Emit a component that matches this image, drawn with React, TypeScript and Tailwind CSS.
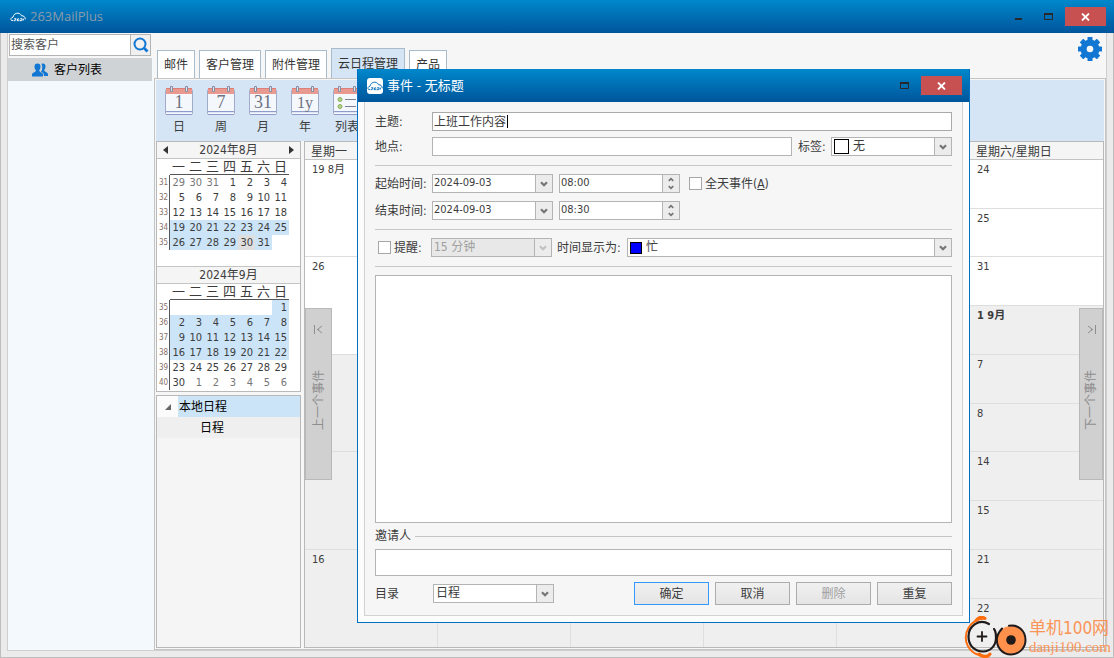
import React, { useState } from 'react';
import clsx from 'clsx';

const tabs = ['邮件', '客户管理', '附件管理', '云日程管理', '产品'];

const views = [
    { glyph: '1', label: '日' },
    { glyph: '7', label: '周' },
    { glyph: '31', label: '月' },
    { glyph: '1y', label: '年' },
    { glyph: '', label: '列表' },
];

const weekdays = ['一', '二', '三', '四', '五', '六', '日'];

type Week = { no: number; days: (number | null)[]; muted?: number[]; marked?: number[]; today?: number };

const august: Week[] = [
    { no: 31, days: [29, 30, 31, 1, 2, 3, 4], muted: [0, 1, 2] },
    { no: 32, days: [5, 6, 7, 8, 9, 10, 11] },
    { no: 33, days: [12, 13, 14, 15, 16, 17, 18] },
    { no: 34, days: [19, 20, 21, 22, 23, 24, 25], marked: [0, 1, 2, 3, 4, 5, 6] },
    { no: 35, days: [26, 27, 28, 29, 30, 31, null], marked: [0, 1, 2, 3, 4, 5], today: 4 },
];

const september: Week[] = [
    { no: 35, days: [null, null, null, null, null, null, 1], marked: [6] },
    { no: 36, days: [2, 3, 4, 5, 6, 7, 8], marked: [0, 1, 2, 3, 4, 5, 6] },
    { no: 37, days: [9, 10, 11, 12, 13, 14, 15], marked: [0, 1, 2, 3, 4, 5, 6] },
    { no: 38, days: [16, 17, 18, 19, 20, 21, 22], marked: [0, 1, 2, 3, 4, 5, 6] },
    { no: 39, days: [23, 24, 25, 26, 27, 28, 29] },
    { no: 40, days: [30, 1, 2, 3, 4, 5, 6], muted: [1, 2, 3, 4, 5, 6] },
];

const planner = [
    { monday: '19 8月', saturday: '24', sunday: '25', grey: false, greySunday: false },
    { monday: '26', saturday: '31', sunday: '1 9月', grey: false, greySunday: true },
    { monday: '', saturday: '7', sunday: '8', grey: true, greySunday: true },
    { monday: '', saturday: '14', sunday: '15', grey: true, greySunday: true },
    { monday: '16', saturday: '21', sunday: '22', grey: true, greySunday: true },
];

const CloudLogo = ({ className }: { className?: string }) => (
    <svg viewBox="0 0 16 10" className={className} fill="none" stroke="currentColor" strokeLinecap="round">
        <path d="M2.500 8.500H1.500C.3 7.200 1 5.600 3 5.200C3.500 2.500 5.500 1 8 1.200C9.800 1.400 11 2.400 11.500 3.800C13.800 3.600 15.300 5 15.300 7" strokeWidth="1" />
        <path d="M4.500 6.800h1.600l-1 1.900H4M8.500 6.800H7.700l-.6 1.900h1.500l.2-.8M10.500 6.800h1.700l-.6 1.900H10M13.500 7l-.4 1.300" strokeWidth="1" />
    </svg>
);

const CalendarIcon = ({ glyph }: { glyph: string }) => (
    <svg width="28" height="30" viewBox="0 0 28 30">
        <rect x="0.500" y="3.500" width="27" height="25" rx="1" fill="#f4f7fb" stroke="#a3abcb" />
        <path d="M1 26.500h26" stroke="#dfe5f3" />
        <path d="M1 25.500h26M1 28.500h26" stroke="#8f9bc8" />
        <rect x="1" y="3" width="26" height="5" fill="#e99a90" />
        <path d="M1 2.500h26" stroke="#dc7f76" />
        <path d="M5.500 0.500h2v5h-2zM20.500 0.500h2v5h-2z" fill="#e4e6ee" stroke="#878ba0" />
        {glyph ? (
            <text x="14" y="22" textAnchor="middle" fontSize={glyph === '1y' ? 16 : 18} fill="#6d7180" fontFamily="'Liberation Serif', serif">
                {glyph}
            </text>
        ) : (
            <>
                <circle cx="7" cy="13.500" r="2" fill="#b5d486" stroke="#8aab5c" />
                <circle cx="7" cy="20.500" r="2" fill="#b5d486" stroke="#8aab5c" />
                <path d="M12 13.500h11M12 20.500h11" stroke="#7d8193" />
            </>
        )}
    </svg>
);

const GearIcon = () => (
    <svg width="24" height="24" viewBox="-12 -12 24 24" fill="#1277d3">
        {[0, 45, 90, 135].map((angle) => (
            <rect key={angle} x="-2.500" y="-12" width="5" height="24" rx="0.500" transform={`rotate(${angle})`} />
        ))}
        <circle r="9.500" />
        <circle r="3.300" fill="#f6f6f6" />
    </svg>
);

const Chevron = ({ up = false, small = false }: { up?: boolean; small?: boolean }) => (
    <svg width={small ? 6 : 8} height={small ? 5 : 6} viewBox="0 0 8 6" fill="none" stroke="currentColor" strokeWidth="2.200">
        <path d={up ? 'M1 4.800L4 1.800L7 4.800' : 'M1 1.200L4 4.200L7 1.200'} />
    </svg>
);

const MaximizeIcon = () => (
    <svg width="9" height="7" viewBox="0 0 9 7">
        <path d="M0.500 0v6.500h8V0" fill="none" stroke="#26282b" />
        <rect width="9" height="2" fill="#26282b" />
    </svg>
);

const CloseButton = () => (
    <button aria-label="关闭" className="flex h-[19px] w-[41px] items-center justify-center bg-[#c75050] text-white">
        <svg width="9" height="8" viewBox="0 0 9 8" stroke="currentColor" strokeWidth="1.800">
            <path d="M1 0.500L8 7.500M8 0.500L1 7.500" />
        </svg>
    </button>
);

const MonthTable = ({ title, weeks, nav = false }: { title: string; weeks: Week[]; nav?: boolean }) => (
    <div className="h-[124px]">
        <div className="flex h-[17px] items-center justify-between border-b border-[#c4c4c4] bg-[#f5f5f5] px-1.5">
            {nav ? (
                <button aria-label="上个月" className="h-0 w-0 border-y-4 border-r-[5px] border-y-transparent border-r-[#333]" />
            ) : <span />}
            <span>{title}</span>
            {nav ? (
                <button aria-label="下个月" className="h-0 w-0 border-y-4 border-l-[5px] border-y-transparent border-l-[#333]" />
            ) : <span />}
        </div>
        <table className="table-fixed border-separate border-spacing-0">
            <colgroup>
                <col className="w-[13px]" />
                {weekdays.map((day) => <col key={day} className="w-[17px]" />)}
            </colgroup>
            <thead>
                <tr className="h-4 leading-[14px]">
                    <th className="p-0" />
                    {weekdays.map((day) => (
                        <th key={day} className="border-b border-[#555] p-0 text-[13px] font-normal">{day}</th>
                    ))}
                </tr>
            </thead>
            <tbody>
                {weeks.map((week) => (
                    <tr key={week.no} className="h-[15px] text-[11px] leading-[15px]">
                        <th className="border-r border-[#555] p-0 text-left text-[8px] font-normal leading-[15px] text-[#876f68]">
                            <span className="pl-0.5">{week.no}</span>
                        </th>
                        {week.days.map((day, i) => (
                            <td
                                key={i}
                                className={clsx(
                                    'p-0 pr-0.5 text-right',
                                    week.today === i ? 'bg-[#dfdfdf]' : week.marked?.includes(i) && 'bg-[#cce4f7]',
                                    week.muted?.includes(i) && 'text-[#777]',
                                )}
                            >
                                {day}
                            </td>
                        ))}
                    </tr>
                ))}
            </tbody>
        </table>
    </div>
);

const EventJump = ({ label, side }: { label: string; side: 'left' | 'right' }) => (
    <button
        className={clsx(
            'absolute top-[166px] flex h-[172px] flex-col items-center border border-[#b9b9b9] bg-[#d0d0d0] pt-4 text-[#8e8e8e]',
            side === 'left' ? 'left-0 w-[27px]' : 'right-0 w-6',
        )}
    >
        <svg width="9" height="9" viewBox="0 0 9 9" fill="none" stroke="currentColor" className={side === 'right' ? 'rotate-180' : ''}>
            <path d="M0.500 0v9M8 1L3.500 4.500L8 8M3 4.500h2" />
        </svg>
        <span className="mt-9 rotate-180 [text-orientation:sideways] [writing-mode:vertical-rl]">{label}</span>
    </button>
);

type ComboProps = {
    id: string;
    options: string[];
    disabled?: boolean;
    swatch?: React.ReactNode;
    padding?: string;
    className?: string;
};

const Combo = ({ id, options, disabled, swatch, padding = 'pl-0.5', className }: ComboProps) => (
    <div className={clsx('relative h-[19px]', disabled ? 'text-[#a0a0a0]' : 'text-[#3c3c3c]', className)}>
        <select
            id={id}
            disabled={disabled}
            className={clsx(
                'block h-full w-full appearance-none border border-[#b4b4b4] pr-5 leading-[17px] opacity-100',
                disabled ? 'bg-[#e8e8e8]' : 'bg-white',
                padding,
            )}
        >
            {options.map((option) => <option key={option}>{option}</option>)}
        </select>
        {swatch && <span className="pointer-events-none absolute inset-y-0 left-[3px] flex items-center">{swatch}</span>}
        <span
            className={clsx(
                'pointer-events-none absolute inset-y-0 right-0 flex w-[18px] items-center justify-center border border-[#b4b4b4] bg-[#ececec]',
                disabled ? 'text-[#c2c2c2]' : 'text-[#757575]',
            )}
        >
            <Chevron />
        </span>
    </div>
);

const DateField = ({ id, value }: { id: string; value: string }) => (
    <div className="flex h-[19px] w-[121px] border border-[#b4b4b4] bg-white">
        <input id={id} defaultValue={value} className="min-w-0 flex-1 px-px text-[11px] outline-none" />
        <button aria-label="选择日期" className="flex w-[17px] items-center justify-center border-l border-[#b4b4b4] bg-[#ececec] text-[#757575]">
            <Chevron />
        </button>
    </div>
);

const TimeField = ({ label, value }: { label: string; value: string }) => (
    <div className="ml-1.5 flex h-[19px] w-[121px] border border-[#b4b4b4] bg-white">
        <input aria-label={label} defaultValue={value} className="min-w-0 flex-1 px-px text-[11px] outline-none" />
        <div className="flex w-[17px] flex-col border-l border-[#b4b4b4] bg-[#ececec] text-[#757575]">
            <button aria-label="增加" className="flex flex-1 items-center justify-center"><Chevron up small /></button>
            <button aria-label="减少" className="flex flex-1 items-center justify-center"><Chevron small /></button>
        </div>
    </div>
);

const inputStyle = 'h-[19px] min-w-0 flex-1 border border-[#b4b4b4] bg-white px-px outline-none';
const boxStyle = 'h-[13px] w-[13px] appearance-none border border-[#a6a6a6] bg-white checked:bg-[#1277d3]';
const buttonStyle = 'h-[23px] w-[75px] border bg-linear-to-b from-[#f0f0f0] to-[#e5e5e5]';

const EventDialog = () => {
    const [subject, setSubject] = useState('上班工作内容');

    return (
        <section role="dialog" aria-label="事件 - 无标题" className="absolute left-[357px] top-[69px] w-[613px] border border-t-0 border-[#0070c4] bg-[#fcfcfc]">
            <header className="flex h-[33px] items-center bg-linear-to-b from-[#0088cc] to-[#00559b] pl-[9px] pr-[7px] text-white">
                <span className="flex h-4 w-4 items-center rounded-[3px] bg-white text-[#1176bd]">
                    <CloudLogo className="w-4" />
                </span>
                <h2 className="ml-1 flex-1 text-[13px]">事件 - 无标题</h2>
                <button aria-label="最大化" className="mr-3"><MaximizeIcon /></button>
                <CloseButton />
            </header>

            <form className="mx-1.5 mb-1.5 border border-t-0 border-[#d2d2d2] bg-[#f6f6f6] px-2.5 pb-2.5 pt-2.5" onSubmit={(e) => e.preventDefault()}>
                <div className="flex items-center">
                    <label htmlFor="subject" className="w-[57px]">主题:</label>
                    <div className="flex h-[19px] flex-1 items-center border border-[#a9a9a9] bg-white">
                        <input
                            id="subject"
                            value={subject}
                            onChange={(e) => setSubject(e.target.value)}
                            className="w-[74px] px-px outline-none"
                        />
                        <span className="h-[13px] w-px bg-black" />
                    </div>
                </div>
                <div className="mt-1.5 flex items-center">
                    <label htmlFor="place" className="w-[57px]">地点:</label>
                    <input id="place" className={inputStyle} />
                    <label htmlFor="tag" className="w-[39px] pl-1.5">标签:</label>
                    <Combo
                        id="tag"
                        options={['无']}
                        className="w-[121px]"
                        padding="pl-[21px]"
                        swatch={<i className="h-[15px] w-[15px] border border-black bg-white" />}
                    />
                </div>

                <hr className="my-2 mt-[9px] border-[#c6c6c6]" />

                <div className="flex items-center">
                    <label htmlFor="start" className="w-[57px]">起始时间:</label>
                    <DateField id="start" value="2024-09-03" />
                    <TimeField label="起始时刻" value="08:00" />
                    <label className="ml-[9px] flex items-center gap-[3px]">
                        <input type="checkbox" className={boxStyle} />
                        <span>全天事件(<u>A</u>)</span>
                    </label>
                </div>
                <div className="mt-2 flex items-center">
                    <label htmlFor="end" className="w-[57px]">结束时间:</label>
                    <DateField id="end" value="2024-09-03" />
                    <TimeField label="结束时刻" value="08:30" />
                </div>

                <hr className="my-2 mt-[9px] border-[#c6c6c6]" />

                <div className="flex items-center">
                    <label className="flex w-14 items-center gap-[3px] pl-[3px]">
                        <input type="checkbox" className={boxStyle} />
                        提醒:
                    </label>
                    <Combo id="remind" options={['15 分钟']} disabled className="w-[121px]" />
                    <label htmlFor="showAs" className="w-[75px] pl-[5px]">时间显示为:</label>
                    <Combo
                        id="showAs"
                        options={['忙']}
                        className="flex-1"
                        padding="pl-[18px]"
                        swatch={<i className="h-3 w-3 border border-black bg-[#0000ff]" />}
                    />
                </div>

                <hr className="my-2 mt-[9px] border-[#c6c6c6]" />

                <textarea aria-label="内容" className="block h-[248px] w-full resize-none border border-[#b4b4b4] bg-white outline-none" />

                <div className="flex h-[26px] items-center gap-1">
                    <label htmlFor="invitee">邀请人</label>
                    <hr className="flex-1 border-[#c6c6c6]" />
                </div>
                <input id="invitee" className="block h-[27px] w-full border border-[#b4b4b4] bg-white px-px outline-none" />

                <div className="mt-1.5 flex items-center gap-1.5">
                    <label htmlFor="folder" className="w-[52px]">目录</label>
                    <Combo id="folder" options={['日程']} className="w-[121px]" />
                    <span className="flex-1" />
                    <button type="submit" className={clsx(buttonStyle, 'border-[#3399ff]')}>确定</button>
                    <button type="button" className={clsx(buttonStyle, 'border-[#acacac]')}>取消</button>
                    <button type="button" disabled className={clsx(buttonStyle, 'border-[#acacac] text-[#a0a0a0]')}>删除</button>
                    <button type="button" className={clsx(buttonStyle, 'border-[#acacac]')}>重复</button>
                </div>
            </form>
        </section>
    );
};

const SiteMark = () => (
    <div className="absolute bottom-0 right-[3px] flex items-center gap-0.5 text-[#fb9557]">
        <svg width="63" height="42" viewBox="0 0 63 42" fill="none" strokeLinecap="round">
            <path d="M20 2.500C6 3.500-1 17 3 28C6 36 14 41 24 39.500" stroke="#ff6d0d" strokeWidth="2" />
            <path d="M12 4.500C15 1 18 0 21 2.500M15 38C19 41.500 23 42 26 38" stroke="#ff6d0d" strokeWidth="3" />
            <path d="M25 8C15 2 4.500 10 4.500 20.500C4.500 30 11 35.500 19 35.500C27 35.500 32 29 32 22C32 17 31 14 30 13" stroke="#211a1b" strokeWidth="2.200" />
            <path d="M18 16v9M13.500 20.500h9" stroke="#211a1b" strokeWidth="1.800" />
            <circle cx="47" cy="24" r="14" fill="#ff914d" />
            <path d="M45 9.700C54 8 61.500 15 61.500 24C61.500 33 54 38.500 47 38.500C39 38.500 32 32 33 22C33.500 18 35 16 38 12.500" stroke="#211a1b" strokeWidth="2" />
            <circle cx="47" cy="24" r="4.800" fill="#211a1b" />
        </svg>
        <div>
            <div className="text-[17px] leading-5">单机100网</div>
            <div className="font-['Liberation_Serif',serif] text-[15px] leading-[18px]">danji100.com</div>
        </div>
    </div>
);

const Planner = () => (
    <div className="relative flex min-w-0 flex-1 flex-col border border-[#b9b9b9] bg-white">
        <div className="grid h-[18px] grid-cols-6 border-b border-[#c4c4c4] bg-[#f5f5f5] leading-[21px]">
            <span className="pl-1.5">星期一</span>
            <span className="col-start-6 whitespace-nowrap pl-1.5">星期六/星期日</span>
        </div>
        {planner.map((week, i) => (
            <div key={i} className="grid flex-1 grid-cols-6">
                {[0, 1, 2, 3, 4].map((col) => (
                    <div
                        key={col}
                        className={clsx('border-b border-r border-[#dedede] pl-[7px] leading-[18px]', week.grey && 'bg-[#efefef]', i === 4 && 'border-b-0')}
                    >
                        {col === 0 && <span className="text-[11px]">{week.monday}</span>}
                    </div>
                ))}
                <div className="flex flex-col text-[11px] leading-5">
                    <div className={clsx('flex-1 border-b border-[#dedede] pl-[7px]', week.grey && 'bg-[#efefef]')}>{week.saturday}</div>
                    <div
                        className={clsx(
                            'flex-1 pl-[7px]',
                            i < 4 && 'border-b border-[#dedede]',
                            week.greySunday && 'bg-[#efefef]',
                            i === 1 && 'font-bold',
                        )}
                    >
                        {week.sunday}
                    </div>
                </div>
            </div>
        ))}
        <EventJump label="上一个事件" side="left" />
        <EventJump label="下一个事件" side="right" />
    </div>
);

const App = () => {
    const [activeTab, setActiveTab] = useState('云日程管理');

    return (
        <div className="relative flex min-h-screen flex-col overflow-hidden bg-[#ebebeb] font-['DejaVu_Sans_Condensed','Noto_Sans','Noto_Sans_CJK_SC',sans-serif] text-xs text-[#3c3c3c]">
            {/* Window title bar */}
            <header className="flex h-[33px] items-center bg-linear-to-b from-[#0088cc] to-[#00559b] pl-2.5 pr-2">
                <CloudLogo className="w-4 text-white" />
                <h1 className="ml-1 flex-1 font-['Open_Sans',sans-serif] text-[13px] text-[#8b9bac]">263MailPlus</h1>
                <button aria-label="最小化" className="mr-[22px] mt-1 h-0.5 w-[7px] bg-[#26282b]" />
                <button aria-label="最大化" className="mr-3"><MaximizeIcon /></button>
                <CloseButton />
            </header>

            <div className="flex flex-1 flex-col border border-t-0 border-[#bdbdbd] px-1.5 pb-1.5">
                <div className="flex flex-1 border border-t-0 border-[#cfcfcf] bg-[#f6f6f6]">
                    {/* Customer list */}
                    <aside className="w-[146px] bg-[#f4f9fd]">
                        <div className="h-[25px] bg-[#f6f6f6] px-px pt-px">
                            <div className="flex h-[22px] w-[142px] border border-[#b4b4b4] bg-white">
                                <input aria-label="搜索客户" placeholder="搜索客户" className="min-w-0 flex-1 px-px outline-none placeholder:text-[#555]" />
                                <button aria-label="搜索" className="flex w-5 items-center justify-center border-l border-[#b4b4b4] bg-[#f0f0f0]">
                                    <svg width="16" height="16" viewBox="0 0 16 16" fill="none" stroke="#1277d3" strokeWidth="2">
                                        <circle cx="7" cy="7" r="5.500" />
                                        <path d="M11 11l3.500 3.500" strokeWidth="2.800" />
                                    </svg>
                                </button>
                            </div>
                        </div>
                        <button className="flex h-[23px] w-36 items-center bg-[#d0d3d6] pl-6 text-black">
                            <svg width="16" height="14" viewBox="0 0 16 14" fill="#1277d3">
                                <path d="M9.500 1C11 0 13.500.5 13.500 3.200C13.500 5 13 6 12.200 7C12.200 9 16 9.300 16 11V13H12C12 10.500 11 9.800 9 9C10.800 6 10.500 3 9.500 1Z" />
                                <path d="M5.500.5C3.500.5 2.500 1.800 2.500 3.500C2.500 5.200 3 6.300 3.900 7.200C4 9.400 0 9.300 0 11.500V13.500H11V11.500C11 9.300 7.200 9.400 7.200 7.200C8 6.300 8.500 5.200 8.500 3.500C8.500 1.800 7.500.5 5.500.5Z" />
                            </svg>
                            <span className="ml-1.5">客户列表</span>
                        </button>
                    </aside>

                    <main className="flex min-w-0 flex-1 flex-col">
                        <div className="flex h-[45px] items-end pl-[3px] pr-1">
                            <nav className="flex flex-1 items-end gap-1">
                                {tabs.map((tab) => (
                                    <button
                                        key={tab}
                                        onClick={() => setActiveTab(tab)}
                                        className={clsx(
                                            'border border-b-0 border-[#a9bccb] px-1.5 text-[#333]',
                                            activeTab === tab ? 'h-[30px] bg-[#d5e5f5]' : 'h-7 bg-white',
                                        )}
                                    >
                                        {tab}
                                    </button>
                                ))}
                            </nav>
                            <button aria-label="设置" className="mb-[17px]"><GearIcon /></button>
                        </div>

                        <div className="flex flex-1 flex-col border border-[#c4c4c4] bg-[#f6f6f6] p-px">
                            {/* View switcher */}
                            <div className="flex h-[61px] bg-[#d5e5f5] pl-0.5">
                                {views.map((view) => (
                                    <button key={view.label} className="flex w-[42px] flex-col items-center pt-1.5">
                                        <CalendarIcon glyph={view.glyph} />
                                        <span className="mt-0.5 leading-[18px]">{view.label}</span>
                                    </button>
                                ))}
                            </div>

                            <div className="flex flex-1 gap-[3px]">
                                <div className="flex w-[145px] flex-col gap-[3px]">
                                    <div className="border border-[#b9b9b9] bg-white">
                                        <MonthTable title="2024年8月" weeks={august} nav />
                                        <div className="border-t border-[#c4c4c4]">
                                            <MonthTable title="2024年9月" weeks={september} />
                                        </div>
                                    </div>
                                    <div className="flex-1 border border-[#b9b9b9] bg-[#f5f5f5] text-black">
                                        <div className="flex h-[21px]">
                                            <button aria-label="折叠" className="flex w-[21px] items-center justify-center bg-[#fbfbfb]">
                                                <svg width="6" height="6" viewBox="0 0 6 6"><path d="M6 0v6H0z" fill="#666" /></svg>
                                            </button>
                                            <button className="flex-1 bg-[#cce4f7] pl-px text-left">本地日程</button>
                                        </div>
                                        <button className="block h-[21px] w-full bg-[#efefef] pl-[43px] text-left">日程</button>
                                    </div>
                                </div>
                                <Planner />
                            </div>
                        </div>
                    </main>
                </div>
            </div>

            <EventDialog />
            <SiteMark />
        </div>
    );
};

export default App;
